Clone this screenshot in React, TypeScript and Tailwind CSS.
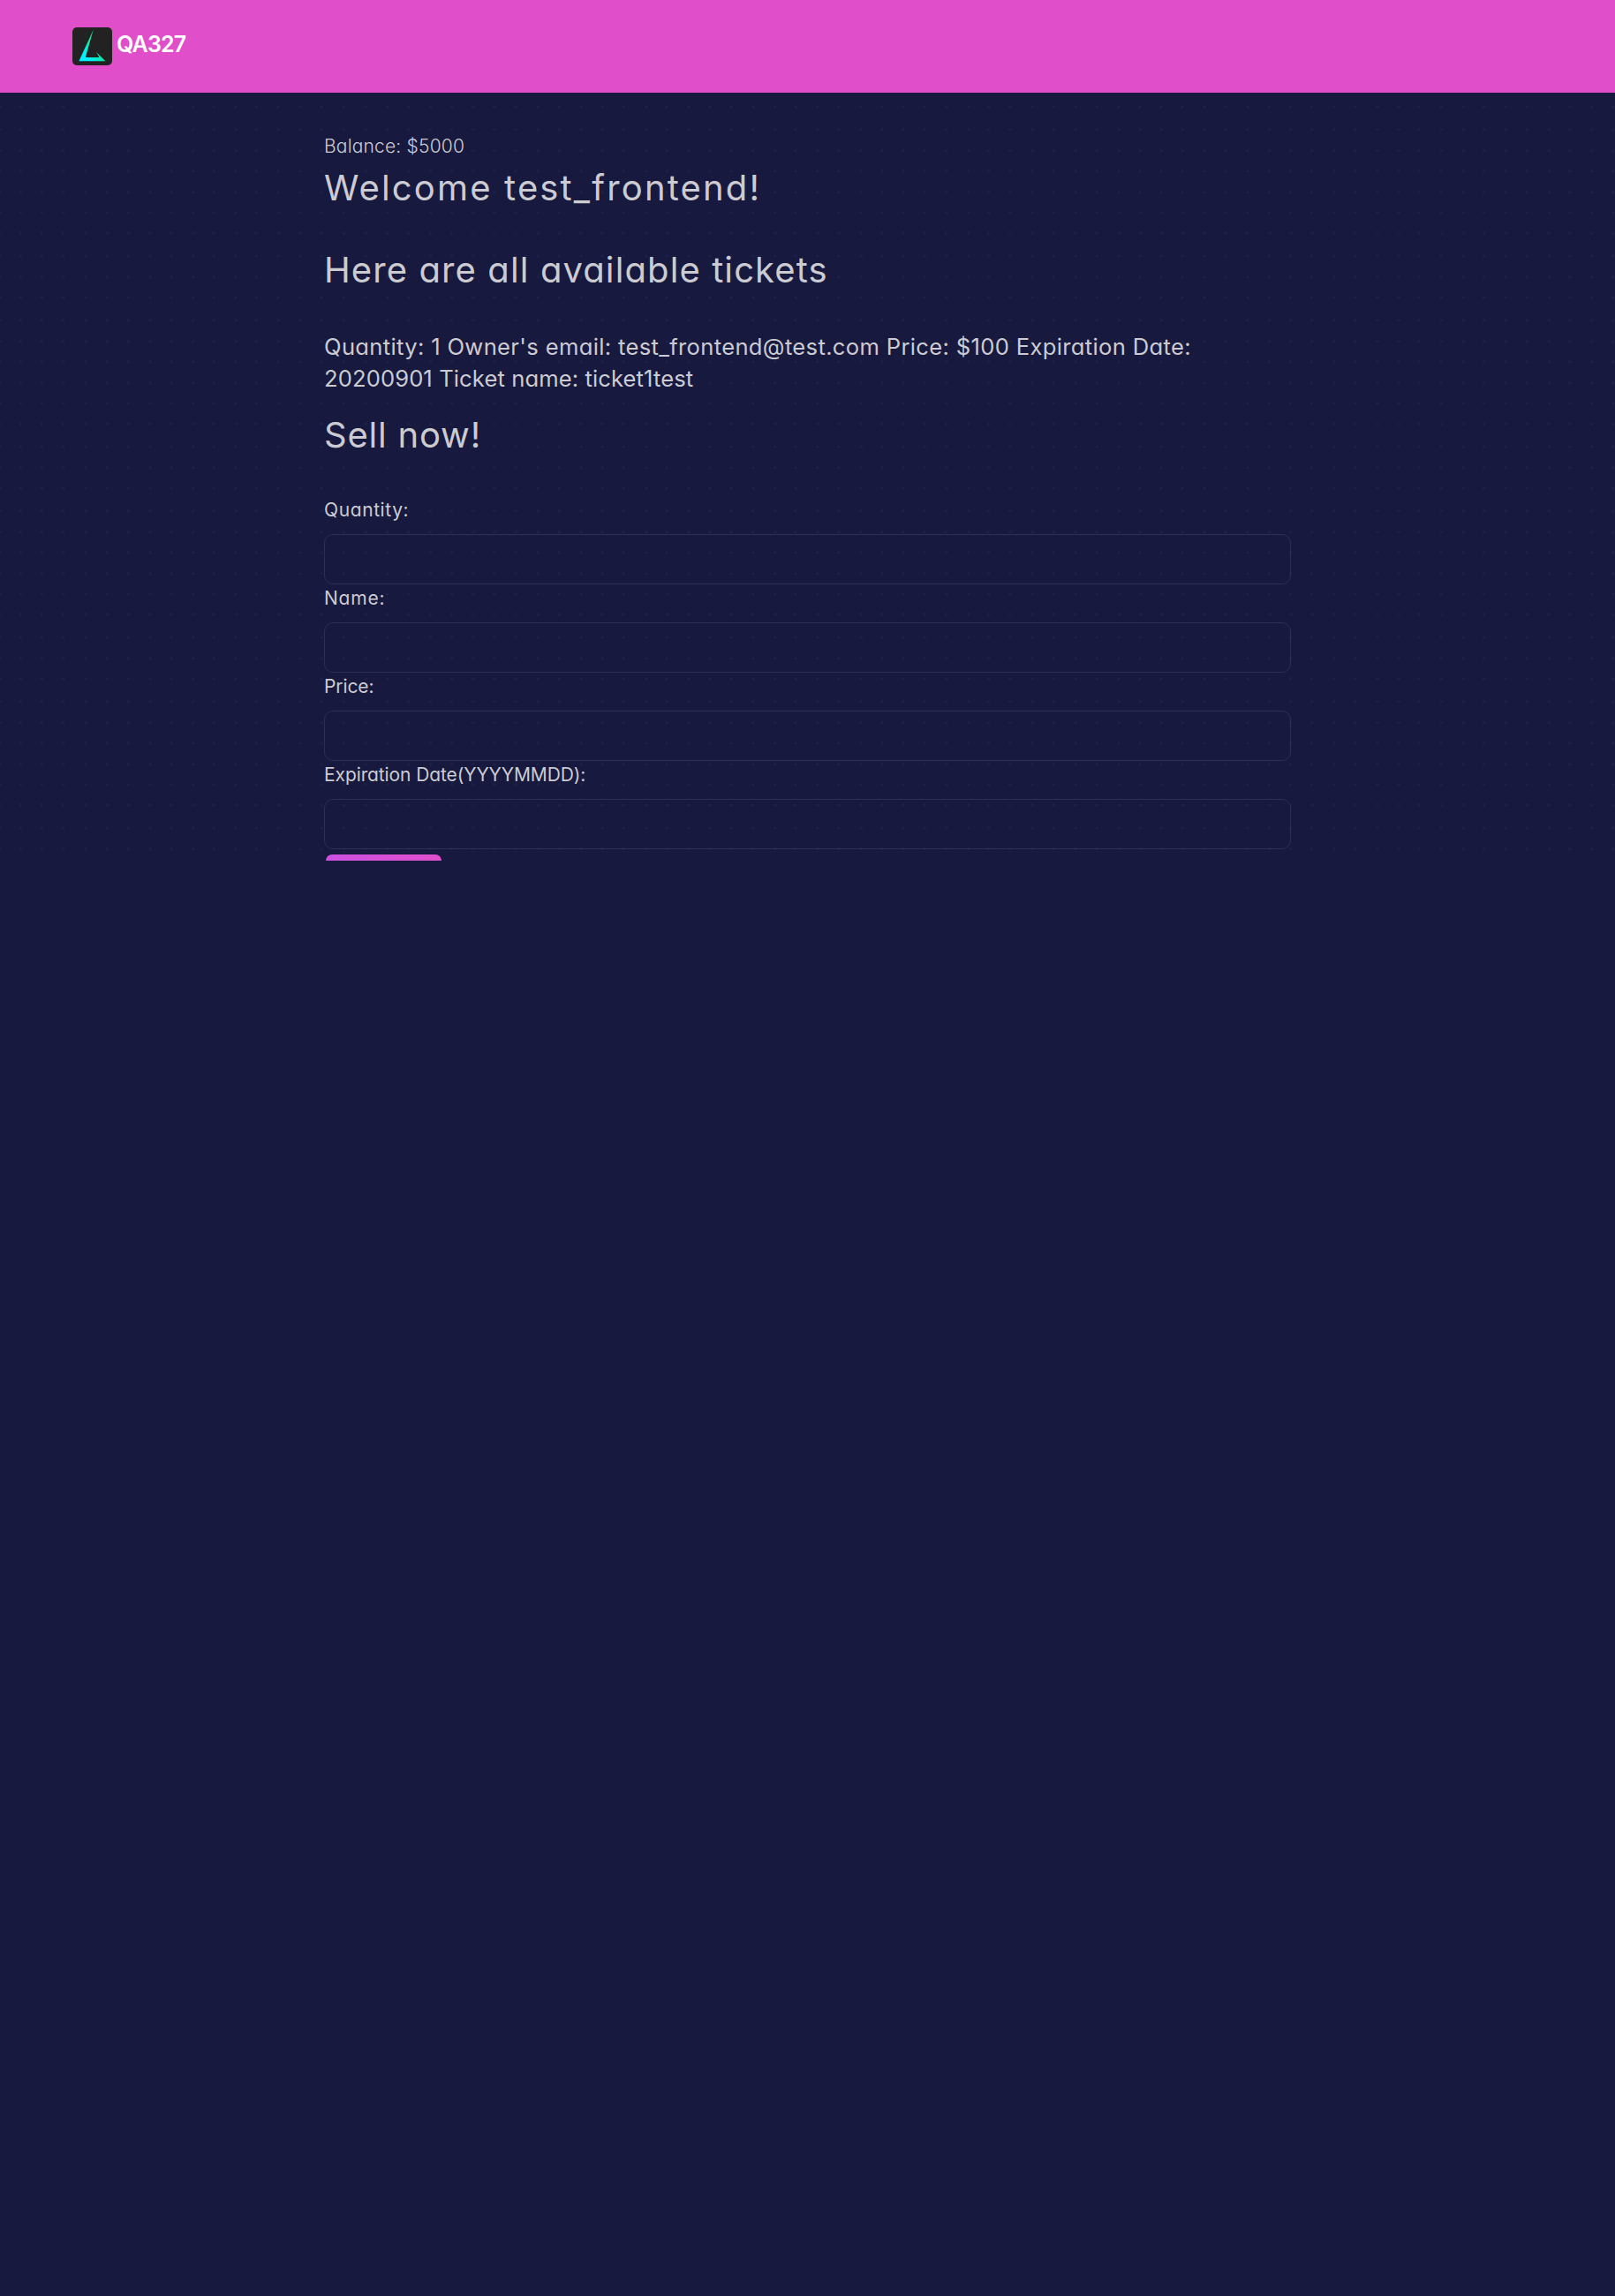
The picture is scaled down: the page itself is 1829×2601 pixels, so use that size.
const dotColumns = [
  0, 23.5, 47.5, 71.5, 97, 121.5, 145.5, 170, 194, 218.8, 242, 267, 290.3, 315.3, 339.8, 364.3, 389.3, 414.3, 438.7,
  462.7, 487.7, 511.7, 536, 560, 584, 609.3, 633.3, 658.3, 682.3, 706.3, 731.7, 755.3, 780.3, 804.3, 827.7, 852.7,
  877.7, 900.7, 925.7, 949.7, 975.3, 999, 1023, 1047.3, 1071.7, 1096.7, 1119.7, 1144, 1169, 1193, 1218.3, 1242.3,
  1267.3, 1291.3, 1315.3, 1339.3, 1363.7, 1388, 1412.7, 1437.5, 1461.5, 1485.5, 1511, 1534.8, 1560, 1584, 1607.2,
  1632.2, 1657.2, 1680.5, 1705.5, 1729.5, 1754.5, 1777.7, 1802.7, 1826.7,
];
const dotRows = [1.7, 24.7, 48, 74, 97.7, 121, 146.7, 170.7, 193.7];

function DotBackdrop() {
  return (
    <svg className="absolute inset-0 h-[870px] w-[1829px]" viewBox="0 105 1829 870" aria-hidden="true">
      <defs>
        <pattern id="dots" width="1829" height="216" patternUnits="userSpaceOnUse">
          {dotRows.map((y) =>
            dotColumns.map((x) => <circle key={`${x}-${y}`} cx={x} cy={y} r="1.5" fill="#202147" />),
          )}
        </pattern>
      </defs>
      <rect y="105" width="1829" height="870" fill="url(#dots)" />
    </svg>
  );
}

function Logo() {
  return (
    <svg className="h-[43px] w-[45px]" viewBox="0 0 45 43" aria-hidden="true">
      <defs>
        <linearGradient id="sail" x1="12" y1="38" x2="30" y2="22" gradientUnits="userSpaceOnUse">
          <stop offset="0.2" stopColor="#00f0ff" />
          <stop offset="0.9" stopColor="#12e59a" />
        </linearGradient>
      </defs>
      <rect width="45" height="43" rx="5" fill="#222222" />
      <path d="M23.8 2.5 L7.4 38.3 H37.4 L27 28 L30.5 34 H14.8 Z" fill="url(#sail)" />
    </svg>
  );
}

const fields = [
  { label: "Quantity:", tracking: "tracking-[0.6px]" },
  { label: "Name:", tracking: "tracking-[0.8px]" },
  { label: "Price:", tracking: "tracking-[-0.1px]" },
  { label: "Expiration Date(YYYYMMDD):", tracking: "tracking-[-0.1px]" },
];

export default function App() {
  return (
    <div className="min-h-[2601px] bg-[#17193e] font-['Inter',sans-serif] text-[#cccbd1] [font-feature-settings:'cv11']">
      <header className="flex h-[105px] items-start bg-[#e14eca] pt-[31px] pl-[82px]">
        <Logo />
        <span className="ml-[5px] text-[25px] leading-[38px] font-semibold tracking-[-0.8px] text-white">QA327</span>
      </header>
      <main className="relative h-[870px] overflow-hidden">
        <DotBackdrop />
        <div className="relative mx-auto w-[1095px] pt-[46px]">
          <p className="text-[21px] leading-[30px] font-[350] tracking-[0.18px]">Balance: $5000</p>
          <h1 className="mt-[8px] text-[40px] leading-[48px] tracking-[2.15px]">Welcome test_frontend!</h1>
          <h2 className="mt-[45px] text-[40px] leading-[48px] tracking-[1.1px]">Here are all available tickets</h2>
          <p className="mt-[45px] text-[25.6px] leading-[36px] whitespace-nowrap">
            <span className="tracking-[0.33px]">
              Quantity: 1 Owner's email: test_frontend@test.com Price: $100 Expiration Date:
            </span>
            <br />
            <span className="tracking-[0.1px]">20200901 Ticket name: ticket1test</span>
          </p>
          <h2 className="mt-[22px] text-[40px] leading-[48px] tracking-[0.8px]">Sell now!</h2>
          <form className="mt-[45px]">
            {fields.map(({ label, tracking }) => (
              <label key={label} className="block">
                <span className={`mb-[12px] block pt-px text-[21px] leading-[30px] ${tracking}`}>{label}</span>
                <input className="block h-[57px] w-full rounded-[10px] border border-[#2b3054] bg-transparent px-4" />
              </label>
            ))}
            <button
              type="button"
              aria-label="Sell"
              className="mt-[6px] ml-[2px] block h-[56px] w-[131px] rounded-[7px] bg-linear-to-r from-[#cb50e1] to-[#e14eca]"
            />
          </form>
        </div>
      </main>
    </div>
  );
}
